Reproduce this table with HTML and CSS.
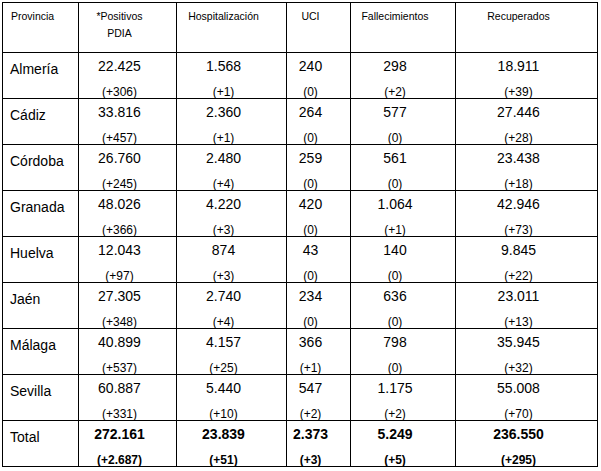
FILE: index.html
```html
<!DOCTYPE html>
<html lang="es">
<head>
<meta charset="utf-8">
<title>Datos COVID-19 Andalucía por provincia</title>
<link rel="stylesheet" href="styles.css">
</head>
<body>
<table class="datos">
  <colgroup>
    <col class="c-prov"><col class="c-pos"><col class="c-hosp"><col class="c-uci"><col class="c-fall"><col class="c-rec">
  </colgroup>
  <thead>
    <tr>
      <th class="prov">Provincia</th>
      <th>*Positivos<br>PDIA</th>
      <th>Hospitalización</th>
      <th>UCI</th>
      <th>Fallecimientos</th>
      <th>Recuperados</th>
    </tr>
  </thead>
  <tbody>
    <tr>
      <td class="prov">Almería</td>
      <td><div class="num">22.425</div><div class="var">(+306)</div></td>
      <td><div class="num">1.568</div><div class="var">(+1)</div></td>
      <td><div class="num">240</div><div class="var">(0)</div></td>
      <td><div class="num">298</div><div class="var">(+2)</div></td>
      <td><div class="num">18.911</div><div class="var">(+39)</div></td>
    </tr>
    <tr>
      <td class="prov">Cádiz</td>
      <td><div class="num">33.816</div><div class="var">(+457)</div></td>
      <td><div class="num">2.360</div><div class="var">(+1)</div></td>
      <td><div class="num">264</div><div class="var">(0)</div></td>
      <td><div class="num">577</div><div class="var">(0)</div></td>
      <td><div class="num">27.446</div><div class="var">(+28)</div></td>
    </tr>
    <tr>
      <td class="prov">Córdoba</td>
      <td><div class="num">26.760</div><div class="var">(+245)</div></td>
      <td><div class="num">2.480</div><div class="var">(+4)</div></td>
      <td><div class="num">259</div><div class="var">(0)</div></td>
      <td><div class="num">561</div><div class="var">(0)</div></td>
      <td><div class="num">23.438</div><div class="var">(+18)</div></td>
    </tr>
    <tr>
      <td class="prov">Granada</td>
      <td><div class="num">48.026</div><div class="var">(+366)</div></td>
      <td><div class="num">4.220</div><div class="var">(+3)</div></td>
      <td><div class="num">420</div><div class="var">(0)</div></td>
      <td><div class="num">1.064</div><div class="var">(+1)</div></td>
      <td><div class="num">42.946</div><div class="var">(+73)</div></td>
    </tr>
    <tr>
      <td class="prov">Huelva</td>
      <td><div class="num">12.043</div><div class="var">(+97)</div></td>
      <td><div class="num">874</div><div class="var">(+3)</div></td>
      <td><div class="num">43</div><div class="var">(0)</div></td>
      <td><div class="num">140</div><div class="var">(0)</div></td>
      <td><div class="num">9.845</div><div class="var">(+22)</div></td>
    </tr>
    <tr>
      <td class="prov">Jaén</td>
      <td><div class="num">27.305</div><div class="var">(+348)</div></td>
      <td><div class="num">2.740</div><div class="var">(+4)</div></td>
      <td><div class="num">234</div><div class="var">(0)</div></td>
      <td><div class="num">636</div><div class="var">(0)</div></td>
      <td><div class="num">23.011</div><div class="var">(+13)</div></td>
    </tr>
    <tr>
      <td class="prov">Málaga</td>
      <td><div class="num">40.899</div><div class="var">(+537)</div></td>
      <td><div class="num">4.157</div><div class="var">(+25)</div></td>
      <td><div class="num">366</div><div class="var">(+1)</div></td>
      <td><div class="num">798</div><div class="var">(0)</div></td>
      <td><div class="num">35.945</div><div class="var">(+32)</div></td>
    </tr>
    <tr>
      <td class="prov">Sevilla</td>
      <td><div class="num">60.887</div><div class="var">(+331)</div></td>
      <td><div class="num">5.440</div><div class="var">(+10)</div></td>
      <td><div class="num">547</div><div class="var">(+2)</div></td>
      <td><div class="num">1.175</div><div class="var">(+2)</div></td>
      <td><div class="num">55.008</div><div class="var">(+70)</div></td>
    </tr>
    <tr class="total">
      <td class="prov">Total</td>
      <td><div class="num">272.161</div><div class="var">(+2.687)</div></td>
      <td><div class="num">23.839</div><div class="var">(+51)</div></td>
      <td><div class="num">2.373</div><div class="var">(+3)</div></td>
      <td><div class="num">5.249</div><div class="var">(+5)</div></td>
      <td><div class="num">236.550</div><div class="var">(+295)</div></td>
    </tr>
  </tbody>
</table>
</body>
</html>
```
FILE: styles.css
```css
html, body {
  margin: 0;
  padding: 0;
  background: #ffffff;
}

body {
  padding: 2px 0 0 2px;
  font-family: "Liberation Sans", Arial, sans-serif;
  color: #000000;
}

.datos {
  border-collapse: collapse;
  table-layout: fixed;
  width: 595px;
}

.c-prov { width: 76px; }
.c-pos { width: 98px; }
.c-hosp { width: 110px; }
.c-uci { width: 64px; }
.c-fall { width: 105px; }
.c-rec { width: 142px; }

.datos th,
.datos td {
  border: 1px solid #000000;
  vertical-align: top;
  text-align: center;
  padding: 0 16px 0 0;
}

.datos th {
  height: 50px;
  box-sizing: border-box;
  font-weight: normal;
  font-size: 10.5px;
  line-height: 17px;
  padding-top: 5px;
}

.datos td {
  height: 46px;
  box-sizing: border-box;
  padding-top: 5px;
}

.datos .prov {
  text-align: left;
  padding-left: 7px;
  padding-right: 0;
}

.datos th.prov {
  padding-left: 8px;
}

.datos td.prov {
  font-size: 14px;
  line-height: 16px;
  padding-top: 8px;
}

.num {
  font-size: 14px;
  line-height: 16px;
}

.var {
  font-size: 12px;
  line-height: 11px;
  margin-top: 13px;
}

.total .num,
.total .var {
  font-weight: bold;
}

.total td {
  height: 45px;
}
```
